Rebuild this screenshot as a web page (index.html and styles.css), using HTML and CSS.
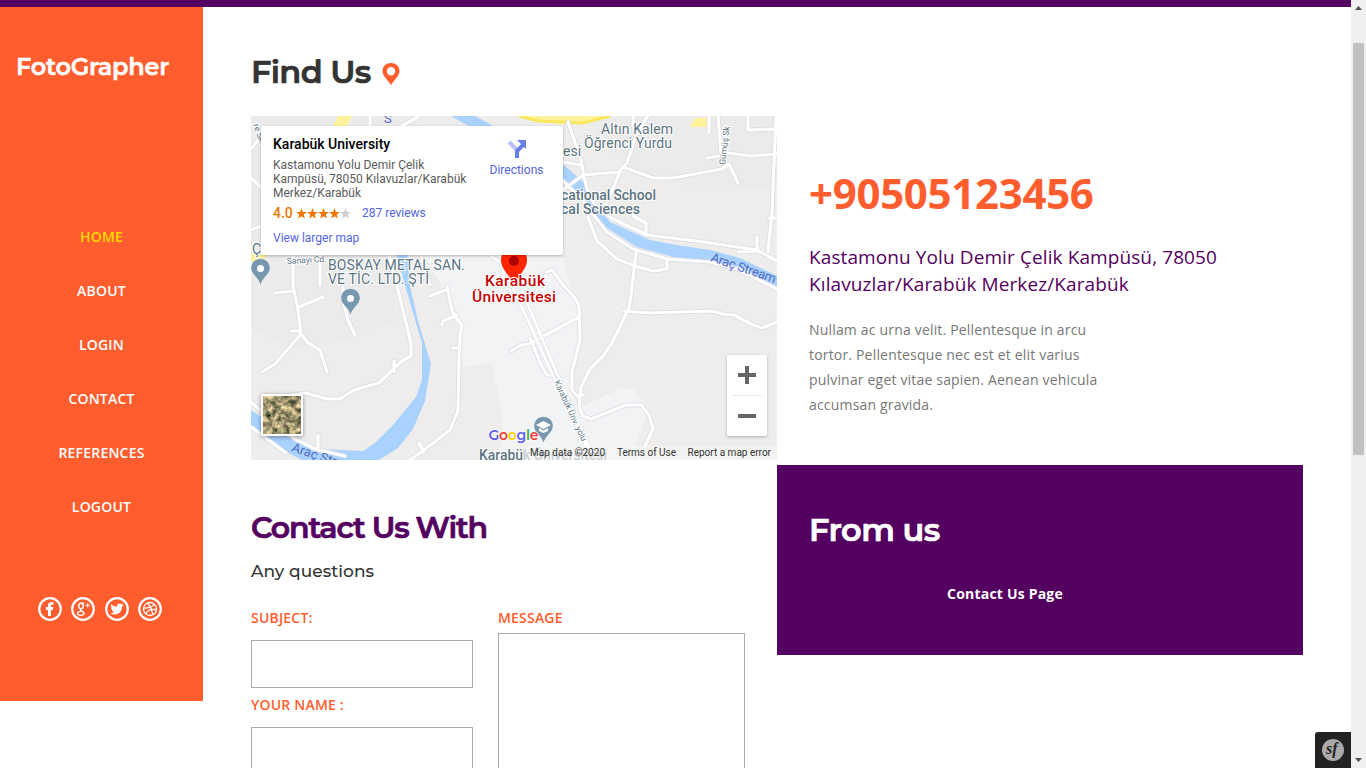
FILE: index.html
```html
<!DOCTYPE html>
<html lang="en">
<head>
<meta charset="utf-8">
<title>FotoGrapher - Contact</title>
<link rel="stylesheet" href="styles.css">
</head>
<body>
<div class="window">
<div class="page">
  <div class="topbar"></div>
  <div class="layout">
    <aside class="sidebar">
      <a class="logo">FotoGrapher</a>
      <nav class="nav"><a class="active">HOME</a><a>ABOUT</a><a>LOGIN</a><a>CONTACT</a><a>REFERENCES</a><a>LOGOUT</a></nav>
      <div class="social">
        <svg viewBox="0 0 24 24"><circle class="ring" cx="12" cy="12" r="10.8"/><path fill="#fff" d="M10 19v-6H8v-3h2V8.500C10 6.200 11.200 5 13.400 5H15.500v2.700H14c-.8 0-1 .3-1 1V10h2.400L15 13h-2v6z"/></svg>
        <svg viewBox="0 0 24 24"><circle class="ring" cx="12" cy="12" r="10.800"/><g fill="none" stroke="#fff"><ellipse cx="10" cy="9" rx="2.300" ry="2.700" stroke-width="1.500"/><path stroke-width="1.100" d="M9.500 6h4M10 12c-2 1 1 1.500 2 2.500M16.700 6v4.500M14.500 8.300h4.500"/><ellipse cx="9.800" cy="16.300" rx="3.200" ry="2" stroke-width="1.300"/></g></svg>
        <svg viewBox="0 0 24 24"><circle class="ring" cx="12" cy="12" r="10.800"/><path fill="#fff" d="M18.500 8.200l-1.400 1.300c.1 4.500-3.200 8-7.300 8-1.700 0-3.100-.5-4.300-1.300 1.500.1 2.800-.3 3.900-1.100-1.300-.1-2.200-.9-2.500-2h1.200c-1.400-.5-2.200-1.500-2.200-2.900l1.200.3C5.900 9.500 5.700 8.200 6.400 7c1.500 1.700 3.200 2.700 5.500 2.800C11.600 7.800 12.900 6.400 14.600 6.400c.8 0 1.400.3 1.900.8l1.700-.6-1 1.400z"/></svg>
        <svg viewBox="0 0 24 24"><circle class="ring" cx="12" cy="12" r="10.800"/><g fill="none" stroke="#fff" stroke-width="1.300"><circle cx="12" cy="12" r="6.500"/><path d="M9.500 6c3 3.500 4.500 7 5.200 11.600M5.700 11.200C10 11.300 14 10.300 16.400 7.400M7.700 17C9.500 13 13 11.700 18.400 12.700"/></g></svg>
      </div>
    </aside>
    <main class="content">
      <section class="left">
        <h1 class="find"><span>Find Us</span><svg viewBox="0 0 18 22"><path fill="#ff5d2d" fill-rule="evenodd" d="M9 0C4 0 .5 3.500.5 8 .5 13 5.500 16.500 9 22c3.500-5.500 8.500-9 8.500-14C17.500 3.500 14 0 9 0zM9 4a4.200 4.200 0 1 1 0 8.400A4.200 4.200 0 1 1 9 4z"/></svg></h1>
        <div class="map">
          <svg class="canvas" viewBox="251 116 526 344">
            <defs>
              <path id="roads" d="M568 122l13 38 3 16 5 20 8 11 14 11 36 17 50 6 60 9 20 11M563 162l17 3M563 190l20-15 36-3 8-9 10-30 11-17M623 167l30 11 20 0 49-9 7-5 9 19M620 172l-15 35-3 6M633 216l13 7 0 12M563 181l19 18 10 14 15 19 26 17 34 10 43 3 27 7 40 20M588 217l9 24 20 18 18 7 18 5 14-2 0-10M636 253l-5 42-2 13-17 35-8 12-14 14-9 18-2 20 4 9 8 3 35-14 15 0 8 10 4 14-17 36M624 311l24 2 65-2 9 3 12 1 17 9 11 4 15-6M718 116l3 36 30 4 26-2M748 116v14l26-1M776 116l-4 96-4 40M738 252l19-1 0-14M769 218l8 0M707 158l12-2M546 272l6-2 12 16 11 12 4 8 1 34-8 32 0 18 5 6 6-1M511 351l10-6 8-1 50-27M530 338l12 29 5 8 8 1M447 286l5 25 10 15-2 10-1 23-1 52-8 19-18 14-23 17M430 296l18-7M457 315l-14 6-1 4M452 348h8M419 443l5 9M293 286l5 24 3 24-26 30-13 8M275 293l18-2M299 307l24-10M291 331h8l9 12 12 7 7 22M343 286v15l5 19 7 15M389 255l8 31 14 57 0 13-9 5-23 22-25 7-14 9-13 0-21-6-16 2M394 361v11M251 402l24 21 20 16 20 10 30 7M251 427l35 26M318 435v14M251 178l13 12M251 149l11-14M251 230l13-5M293 255v31M320 255v31M421 255l9 30M370 116v12M400 127l18-10M490 255l12 9 2 15M633 116v12M709 116v17"/>
            </defs>
            <rect x="251" y="116" width="526" height="344" fill="#eeedec"/>
            <path fill="#ebebeb" d="M251 116h165l-23 205-45 19-55 8-42-20zM585 116h192v71l-82-1-68-15z"/>
            <path fill="#f1f3f5" d="M415 240h137l12 22 5 20 9 20 2 40-8 32 2 25 10 7 38-18 13 2 13 18-17 52h-152l22-12 2-29-11-56-30 4-5-57z"/>
            <path fill="#fff29b" d="M338 116h14l-17 35h-14zM519 116h83l-14 6-30 2zM690 127l5-9h14l-2 9zM251 254h16l-2 5-14 3z"/>
            <path fill="none" stroke="#fae85c" stroke-width="3" d="M519 116l20 5 44 2 27-7"/>
            <path fill="#a9d2ff" d="M451 116h24l88 48 22 20 8 18 17 20 40 18 27 5 33 5 30 8 37 18v11l-34-19-33-7-33-3-40-11-30-19-26-30-18-18zM393 240h13l4 46 8 35 13 43-6 37-12 28-15 19-24 15h-67l-20-11-36-27v-15l20 14 28 17 18 8 46 2 12-8 18-18 23-28 6-17 0-37-18-61z"/>
            <use href="#roads" class="roadedge"/><use href="#roads" class="road"/>
            <path d="M509 279l41 90 43 91M517 279l38 90 40 91" fill="none" stroke="#d6d8df" stroke-width="4"/>
            <path d="M509 279l41 90 43 91M517 279l38 90 40 91" fill="none" stroke="#fff" stroke-width="3"/>
            <g class="label">
              <text x="601" y="134" textLength="72">Altın Kalem</text><text x="584" y="148" textLength="88">Öğrenci Yurdu</text><text x="563" y="156">esi</text>
              <g class="strong light"><text x="561" y="200" textLength="95">cational School</text><text x="561" y="214" textLength="79">cal Sciences</text></g>
              <text x="328" y="270" textLength="137">BOSKAY METAL SAN.</text><text x="328" y="284" textLength="101">VE TİC. LTD. ŞTİ</text><text x="252" y="254">Ç</text>
              <text class="small" x="287" y="264" transform="rotate(-3 286 264)">Sanayi Cd.</text>
              <text class="small" transform="translate(725 165) rotate(-83)">Gümüş Sk.</text>
              <text class="small" transform="translate(253 125) rotate(70)">re Sk.</text>
              <text class="small" transform="translate(554 382) rotate(65)" textLength="66">Karabük Ünv. yolu</text>
              <text class="strong" x="479" y="460" textLength="128">Karabük Üniversitesi</text>
            </g>
            <g class="water"><text transform="translate(710 261) rotate(19)" textLength="68">Araç Stream</text><text transform="translate(291 451) rotate(19)">Araç Stream</text><text x="384" y="123">S</text></g>
            <g fill="#7898b0" stroke="#fff" stroke-width=".7"><path id="pin" d="M260.500 258.500c-5.700 0-9.700 4.300-9.700 9.500 0 6.800 7.700 9 9.700 18 2-9 9.700-11.200 9.700-18 0-5.200-4-9.500-9.700-9.500z"/><use href="#pin" x="90" y="30"/><use href="#pin" x="283" y="158"/></g>
            <circle cx="260.500" cy="268.500" r="3.500" fill="#fff"/><circle cx="350.500" cy="298.500" r="3.500" fill="#fff"/>
            <path fill="#fff" d="M536 425l7.500-4 7.500 4-7.500 4zM539 428l4.500 2.500 4.500-2.500v3l-4.500 2-4.500-2z"/>
            <path fill="#ff2500" d="M514 247c-8 0-13 6-13 13 0 10 9 14 13 26 4-12 13-16 13-26 0-7-5-13-13-13z"/><circle cx="514" cy="261" r="5" fill="#b00000"/>
            <g class="place"><text x="485" y="286" textLength="60">Karabük</text><text x="472" y="301.500" textLength="84">Üniversitesi</text></g>
            <text class="google" x="488.500" y="439.500" textLength="50"><tspan fill="#5b5ced">G</tspan><tspan fill="#f33b32">o</tspan><tspan fill="#ffd000">o</tspan><tspan fill="#5b5ced">g</tspan><tspan fill="#2eb353">l</tspan><tspan fill="#f33b32">e</tspan></text>
            <rect x="524" y="446" width="253" height="14" fill="#f5f5f5" fill-opacity=".7"/>
            <g class="legal"><text x="530" y="456" textLength="75">Map data ©2020</text><text x="617" y="456" textLength="59">Terms of Use</text><text x="687.500" y="456" textLength="83.500">Report a map error</text></g>
          </svg>
          <div class="place-card">
            <div class="place-info"><h2>Karabük University</h2><p>Kastamonu Yolu Demir Çelik<br>Kampüsü, 78050 Kılavuzlar/Karabük<br>Merkez/Karabük</p>
              <div class="rating"><b>4.0</b><svg viewBox="0 0 55 11"><defs><path id="star" d="M5.500 0l1.400 3.900 4.100.1-3.300 2.500 1.200 4-3.400-2.300-3.400 2.300 1.200-4L0 4l4.100-.1z"/></defs><g fill="#f17300"><use href="#star"/><use href="#star" x="11"/><use href="#star" x="22"/><use href="#star" x="33"/></g><use href="#star" x="44" fill="#ccc"/></svg><a>287 reviews</a></div>
              <a class="larger">View larger map</a></div>
            <div class="directions"><svg viewBox="0 0 20 20"><path d="M2 3l8 8" stroke="#b9c1f5" stroke-width="4"/><path d="M10 19v-7l7-7" fill="none" stroke="#687fe5" stroke-width="4"/><path d="M10 1h9v9z" fill="#687fe5"/></svg><a>Directions</a></div>
          </div>
          <svg class="satellite" viewBox="0 0 42 42"><defs><filter id="terrain" x="0" y="0" width="1" height="1" color-interpolation-filters="sRGB"><feTurbulence type="fractalNoise" baseFrequency=".17" numOctaves="4" seed="8"/><feColorMatrix values="1.3 .4 0 0 -.22 1.1 .3 .1 0 -.16 .9 .3 0 0 -.16 0 0 0 0 1"/></filter></defs><rect width="42" height="42" rx="2" fill="#fff"/><rect x="2" y="2" width="38" height="38" fill="#8e8a66" filter="url(#terrain)"/></svg>
          <div class="zoom"><svg viewBox="0 0 40 81"><path d="M11 20h18M20 11v18M11 61h18" stroke="#666" stroke-width="4"/><path d="M5 40.500h30" stroke="#e6e6e6"/></svg></div>
        </div>
        <h2 class="contact-title">Contact Us With</h2>
        <h3 class="questions">Any questions</h3>
        <form class="form"><div class="fields"><label>SUBJECT:</label><input type="text"><label class="second">YOUR NAME :</label><input type="text"></div><div class="message"><label>MESSAGE</label><textarea></textarea></div></form>
      </section>
      <section class="right">
        <div class="details"><div class="phone">+90505123456</div><p class="address">Kastamonu Yolu Demir Çelik Kampüsü, 78050<br>Kılavuzlar/Karabük Merkez/Karabük</p><p class="copy">Nullam ac urna velit. Pellentesque in arcu<br>tortor. Pellentesque nec est et elit varius<br>pulvinar eget vitae sapien. Aenean vehicula<br>accumsan gravida.</p></div>
        <div class="from"><h2>From us</h2><p>Contact Us Page</p></div>
      </section>
    </main>
  </div>
</div>
<div class="scrollbar"><svg viewBox="0 0 15 768"><rect x="2" y="43" width="11" height="412" fill="#c1c1c1"/><path fill="#505050" d="M4 10l3.500-4L11 10zM4 758h7l-3.500 4z"/></svg></div>
<div class="debug"><svg viewBox="0 0 24 24"><circle cx="12" cy="12" r="11" fill="#aaa"/><text x="5" y="16">sf</text></svg></div>
</div>
</body>
</html>
```
FILE: styles.css
```css
* { box-sizing: border-box; }
body { margin: 0; font-family: "Open Sans", sans-serif; background: #fff; }
h1, h2, h3, p { margin: 0; }
svg { display: block; }
.window { display: flex; position: relative; width: 1366px; height: 768px; overflow: hidden; }
.page { width: 1351px; }
.topbar { height: 7px; background: #540060; }
.layout { display: flex; align-items: flex-start; }
.sidebar { width: 203px; height: 694px; background: #ff5d2d; padding-top: 40px; color: #fff; }
.logo { display: block; height: 40px; padding-left: 16px; font: 600 24px/40px Montserrat, Inter, sans-serif; letter-spacing: -.25px; white-space: nowrap; -webkit-text-stroke: .5px; }
.nav { padding-top: 123px; display: flex; flex-direction: column; align-items: center; }
.nav a { height: 54px; line-height: 54px; font-size: 14px; font-weight: 600; letter-spacing: .2px; }
.nav .active { color: #ffd900; }
.social { display: flex; gap: 9.400px; margin: 63px 0 0 38px; }
.social svg { width: 24px; height: 24px; }
.ring { fill: none; stroke: #fff; stroke-width: 2.200; }
.content { display: grid; grid-template-columns: 526px 526px; margin-left: 48px; }
.find, .contact-title, .questions, .from h2 { font-family: Montserrat, Inter, sans-serif; }
.find { display: flex; padding-top: 45px; height: 109px; align-items: flex-start; font-size: 32px; font-weight: 600; line-height: 40px; letter-spacing: -.65px; color: #333; -webkit-text-stroke: .7px; }
.find span { width: 131px; }
.find svg { width: 18px; height: 22px; margin-top: 11px; -webkit-text-stroke: 0; }
.map { position: relative; height: 344px; overflow: hidden; font-family: Roboto, sans-serif; }
.canvas { width: 526px; height: 344px; }
.roadedge, .road { fill: none; stroke-linejoin: round; stroke-linecap: round; }
.roadedge { stroke: #d9dae1; stroke-width: 4.600; }
.road { stroke: #fff; stroke-width: 3.200; }
.label { font-size: 14px; fill: #5b7482; stroke: #fff; stroke-width: 2px; paint-order: stroke; }
.strong { font-weight: 500; }
.light { stroke-width: 1.500px; }
.small { font-size: 8.500px; }
.water { font-size: 13px; fill: #526cc5; }
.place { font-size: 15.500px; font-weight: 500; fill: #c60000; stroke: #fff; stroke-width: 2px; paint-order: stroke; }
.google { font: 600 14px Montserrat, Inter, sans-serif; stroke: #fff; stroke-width: 1px; paint-order: stroke; }
.legal { font-size: 10px; fill: #333; }
.place-card { position: absolute; left: 10px; top: 10px; width: 302px; height: 129px; display: flex; background: #fff; padding: 9px 12px; border-radius: 2px; box-shadow: 0 1px 3px #0004; }
.place-info { width: 215px; font-size: 12px; color: #5b5b5b; white-space: nowrap; }
.place-info h2 { font-size: 14px; line-height: 18px; font-weight: 500; color: #000; }
.place-info p { margin-top: 5px; line-height: 14px; }
.place-card a { color: #5364df; }
.rating { display: flex; align-items: center; height: 18px; margin-top: 4px; }
.rating b { width: 23px; font-size: 14px; font-weight: 500; color: #e77600; }
.rating svg { width: 55px; height: 11px; margin-right: 11px; }
.larger { display: block; margin-top: 8px; line-height: 16px; }
.directions { width: 57px; display: flex; flex-direction: column; align-items: center; font-size: 12px; padding-top: 4px; }
.directions svg { width: 20px; height: 20px; margin-bottom: 4px; }
.satellite { position: absolute; left: 10px; top: 278px; width: 42px; height: 42px; filter: drop-shadow(0 1px 2px #0006); }
.zoom { position: absolute; right: 10px; top: 239px; width: 40px; height: 81px; background: #fff; border-radius: 2px; box-shadow: 0 1px 3px #0004; }
.contact-title { margin-top: 48px; font-size: 30px; font-weight: 600; line-height: 40px; letter-spacing: -1.150px; color: #540060; -webkit-text-stroke: .7px; }
.questions { margin-top: 11px; font-size: 17px; line-height: 24px; font-weight: 500; letter-spacing: .05px; color: #333; }
.form { display: flex; gap: 25px; margin-top: 25px; }
.fields { width: 222px; display: flex; flex-direction: column; }
.message { width: 247px; }
.form label { display: block; height: 20px; font-size: 14px; line-height: 20px; font-weight: 600; letter-spacing: .2px; color: #ff5d2d; }
.form input { width: 222px; height: 48px; margin-top: 12px; padding: 0; border: 1px solid #aaa; background: #fff; }
.form .second { margin-top: 7px; }
.form textarea { display: block; width: 247px; height: 200px; margin-top: 5px; border: 1px solid #aaa; resize: none; }
.details { height: 458px; padding: 156px 0 0 32px; white-space: nowrap; }
.phone { height: 60px; font-size: 42px; line-height: 60px; font-weight: 700; letter-spacing: -.3px; color: #ff5d2d; }
.address { margin-top: 21px; font-size: 19px; line-height: 27px; letter-spacing: .1px; color: #540060; }
.copy { margin-top: 19px; font-size: 14px; line-height: 25px; letter-spacing: .18px; color: #777; }
.from { height: 190px; padding: 45px 32px 0; background: #540060; color: #fff; }
.from h2 { font-size: 32px; font-weight: 600; line-height: 40px; letter-spacing: -.55px; -webkit-text-stroke: .7px; }
.from p { width: 392px; margin-top: 33px; text-align: center; font-size: 14px; line-height: 22px; font-weight: 700; letter-spacing: .2px; }
.scrollbar { width: 15px; background: #f0f0f0; }
.debug { position: absolute; right: 15px; bottom: 0; width: 36px; height: 36px; padding: 6px; background: #222; border-radius: 3px 0 0; }
.debug text { font: italic 700 16px "Liberation Serif", serif; fill: #222; }
```
